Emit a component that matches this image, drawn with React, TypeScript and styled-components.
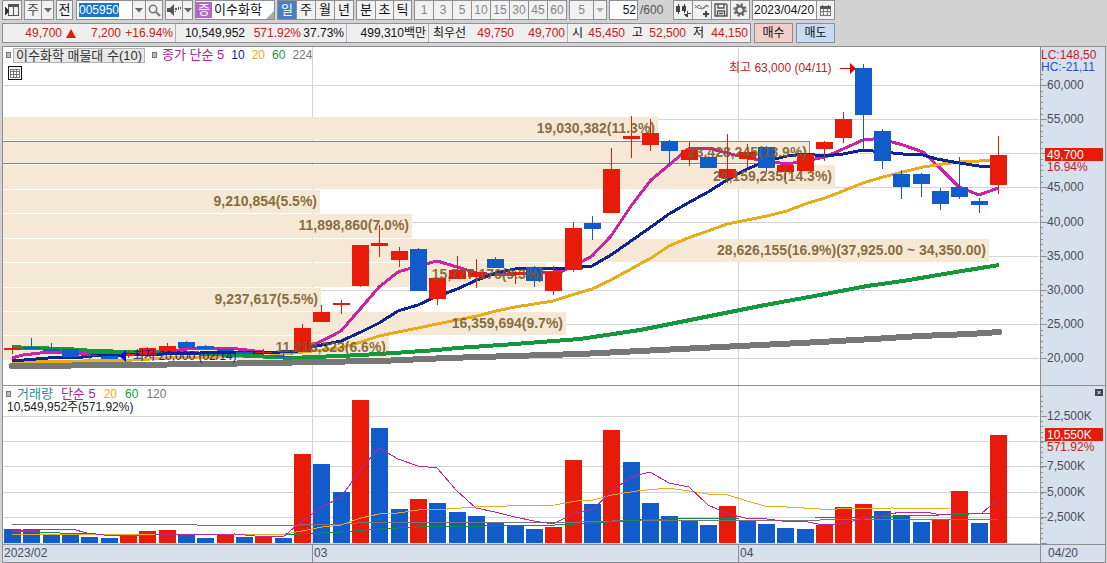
import React from "react";
import styled, { createGlobalStyle, css } from "styled-components";

const colors = {
  frame: "#d2d2d2",
  line: "#8f8f93",
  button: "#f1f1f1",
  axis: "#d7e1ee",
  grid: "#d4d4d4",
  up: "#e81a0a",
  down: "#125bcb",
  band: "#f5e9d6",
  bandText: "#7a5c2c",
  ma5: "#cc22a4",
  ma10: "#0f2490",
  ma20: "#e5ac1d",
  ma60: "#14983c",
  ma224: "#777777",
  red: "#c42018",
  text: "#4c4c54",
};

const GlobalStyle = createGlobalStyle`
  *, *::before, *::after { box-sizing: border-box; }
  body {
    margin: 0;
    background: ${colors.frame};
    color: #111;
    font-family: "Liberation Sans", "Noto Sans CJK KR", sans-serif;
    font-size: 12px;
    line-height: 18px;
  }
  button, input, select { font: inherit; color: inherit; margin: 0; padding: 0; border-radius: 0; }
`;

const Page = styled.main`
  display: flex;
  flex-direction: column;
  gap: 3px;
`;

const Toolbar = styled.div`
  display: flex;
  height: 20px;
  padding-left: 2px;
  gap: 2px;
`;

const Group = styled.div<{ $gap?: number }>`
  display: flex;
  flex: none;
  margin-right: ${(p) => p.$gap ?? 0}px;
  background: ${colors.button};
  border: 1px solid ${colors.line};
`;

const ToolButton = styled.button<{ $w: number; $active?: boolean; $dim?: boolean; $big?: boolean }>`
  display: flex;
  align-items: center;
  justify-content: center;
  flex: none;
  width: ${(p) => p.$w}px;
  height: 18px;
  line-height: 18px;
  font-size: ${(p) => (p.$big ? 13 : 12)}px;
  border: 0;
  background: ${(p) => (p.$active ? "#4a7fc2" : "transparent")};
  color: ${(p) => (p.$active ? "#fff" : p.$dim ? "#85858a" : "#111")};
  & + &, div + &, input + & { border-left: 1px solid ${colors.line}; }
`;

const SelectBox = styled.label<{ $w: number; $arrow: number; $dim?: boolean }>`
  display: grid;
  grid-template-columns: 1fr ${(p) => p.$arrow}px;
  flex: none;
  width: ${(p) => p.$w}px;
  border: 1px solid ${colors.line};
  background: ${colors.button};
  color: ${(p) => (p.$dim ? "#85858a" : "#444")};
  select {
    grid-area: 1 / 1 / 2 / 3;
    appearance: none;
    border: 0;
    background: transparent;
    width: 100%;
    height: 18px;
    padding: 0 ${(p) => p.$arrow}px 0 0;
    text-align: center;
    text-align-last: center;
    font-size: ${(p) => (p.$dim ? 12 : 13)}px;
    opacity: 1;
  }
`;

const ArrowCell = styled.span`
  grid-area: 1 / 2;
  display: flex;
  align-items: center;
  justify-content: center;
  border-left: 1px solid ${colors.line};
  pointer-events: none;
`;

const CodeField = styled.div`
  display: flex;
  align-items: center;
  width: 55px;
  padding-left: 2px;
  background: #fff;
  input {
    width: 40px;
    height: 14px;
    border: 0;
    line-height: 14px;
    background: #1a76cc;
    color: #fff;
    outline: none;
  }
`;

const NameBox = styled.div`
  display: flex;
  align-items: center;
  flex: none;
  width: 80px;
  border: 1px solid ${colors.line};
  background: #fff;
  font-size: 13px;
  white-space: nowrap;
`;

const MarketBadge = styled.span`
  flex: none;
  width: 16px;
  height: 16px;
  margin-right: 2px;
  line-height: 16px;
  text-align: center;
  background: #b368c8;
  color: #fff;
`;

const Corner = styled.svg`
  align-self: flex-end;
  margin-left: auto;
  flex: none;
`;

const TextField = styled.input<{ $w: number; $right?: boolean }>`
  width: ${(p) => p.$w}px;
  height: 18px;
  border: 0;
  padding: 0 1px;
  background: #fff;
  text-align: ${(p) => (p.$right ? "right" : "left")};
`;

const CountLabel = styled.span`
  flex: none;
  width: 31px;
  line-height: 20px;
  color: #555;
`;

const StatusRow = styled.div`
  display: flex;
  height: 20px;
  padding-left: 2px;
  gap: 3px;
`;

const Quote = styled.div`
  display: flex;
  flex: none;
  border: 1px solid ${colors.line};
  background: #efefef;
`;

const Cell = styled.div<{ $w: number }>`
  display: flex;
  justify-content: flex-end;
  align-items: center;
  flex: none;
  width: ${(p) => p.$w}px;
  padding-right: 2px;
  & + & { border-left: 1px solid #b4b4b8; }
`;

const Value = styled.span<{ $w?: number; $up?: boolean }>`
  ${(p) => p.$w && css`width: ${p.$w}px;`}
  text-align: right;
  white-space: nowrap;
  color: ${(p) => (p.$up ? colors.red : "#111")};
`;

const Marker = styled.svg`
  flex: none;
  margin-left: 4px;
`;

const TradeButton = styled.button<{ $buy?: boolean }>`
  width: 39px;
  height: 20px;
  border: 1px solid ${colors.line};
  background: ${(p) => (p.$buy ? "#f2cfcb" : "#c5dcf2")};
`;

const ChartFrame = styled.section`
  margin: 0 1px 0 2px;
  border: 1px solid ${colors.line};
  background: #fff;
`;

const Panel = styled.div`
  position: relative;
  & + & { border-top: 1px solid ${colors.line}; }
`;

const Plot = styled.svg`
  display: block;
  width: 100%;
  height: auto;
`;

const Overlay = styled.div`
  position: absolute;
  top: 0;
  left: 0;
  padding-left: 3px;
`;

const Legend = styled.div<{ $gap: number }>`
  display: flex;
  align-items: center;
  height: 16px;
  line-height: 16px;
  gap: ${(p) => p.$gap}px;
  font-size: 12px;
`;

const LegendItem = styled.span<{ $color: string; $wide?: boolean }>`
  color: ${(p) => p.$color};
  font-size: ${(p) => (p.$wide ? 13 : 12)}px;
`;

const Handle = styled.span`
  width: 5px;
  height: 6px;
  margin-right: -2px;
  border: 1px solid #777;
  background: #bbb;
`;

const TitleButton = styled.button`
  height: 15px;
  margin-left: -3px;
  padding: 0 2px;
  line-height: 13px;
  font-size: 13px;
  border: 1px solid #b4b4b4;
  background: #e9e9e9;
  color: #333;
  white-space: nowrap;
`;

const GridButton = styled.button`
  display: block;
  width: 14px;
  height: 14px;
  margin: 3px 0 0 2px;
  border: 0;
  background: #fff;
  svg { display: block; }
`;

const VolumeNote = styled.div`
  padding-left: 1px;
  line-height: 10px;
  color: #222;
`;

const DateBar = styled.div`
  display: grid;
  grid-template-columns: minmax(0, 309fr) minmax(0, 426fr) minmax(0, 302fr) minmax(0, 65fr);
  height: 18px;
  border-top: 1px solid ${colors.line};
  background: ${colors.axis};
  color: ${colors.text};
`;

const DateCell = styled.span<{ $pad?: boolean }>`
  padding-left: ${(p) => (p.$pad ? 7 : 1)}px;
  line-height: 16px;
  & + & { border-left: 1px solid ${colors.line}; }
`;

/* ---------- data ---------- */

const STEP = 58 / 3;
const BAR = 17;
const barX = (i: number) => Math.round(4 + i * STEP);

// [body top, body bottom, high, low, rising]
const candles: [number, number, number, number, 0 | 1][] = [
  [348, 350, 347, 354, 1], [347, 349, 338, 349, 0], [349, 351, 343, 351, 0], [349, 357, 349, 358, 0],
  [355, 356, 353, 359, 0], [356, 359, 355, 359, 0], [354, 356, 350, 358, 1], [348, 355, 347, 357, 1],
  [346, 352, 343, 352, 1], [342, 348, 341, 348, 0], [346, 349, 345, 349, 0], [349, 351, 349, 351, 0],
  [352, 354, 351, 355, 0], [352, 353, 349, 355, 1], [356, 357, 352, 360, 0], [328, 352, 324, 352, 1],
  [312, 322, 305, 322, 1], [303, 305, 300, 314, 1], [245, 286, 245, 287, 1], [243, 246, 225, 257, 1],
  [251, 260, 247, 267, 1], [249, 291, 248, 291, 0], [278, 299, 278, 305, 1], [270, 279, 256, 279, 1],
  [272, 277, 259, 288, 1], [259, 268, 257, 268, 0], [272, 275, 271, 284, 1], [267, 281, 266, 287, 0],
  [272, 291, 266, 295, 1], [228, 270, 222, 272, 1], [223, 229, 216, 240, 0], [169, 213, 148, 213, 1],
  [136, 139, 116, 158, 1], [133, 145, 119, 151, 1], [141, 151, 140, 165, 0], [150, 160, 142, 166, 1],
  [157, 168, 156, 168, 0], [169, 178, 134, 183, 1], [152, 159, 144, 167, 1], [147, 168, 146, 172, 0],
  [165, 172, 163, 179, 1], [154, 171, 154, 171, 1], [142, 149, 141, 161, 1], [119, 138, 112, 143, 1],
  [68, 115, 64, 150, 0], [131, 161, 129, 169, 0], [174, 187, 170, 199, 0], [174, 184, 173, 197, 0],
  [191, 204, 188, 210, 0], [187, 197, 157, 199, 0], [201, 205, 198, 213, 0], [155, 185, 136, 194, 1],
];

// [bar top, rising]
const volumes: [number, 0 | 1][] = [
  [529, 0], [529, 0], [534, 0], [534, 0], [537, 0], [538, 0], [535, 1], [531, 1], [530, 1], [534, 0],
  [538, 0], [534, 1], [537, 0], [537, 1], [538, 0], [454, 1], [464, 0], [492, 0], [400, 1], [428, 0],
  [509, 0], [499, 1], [503, 0], [512, 0], [516, 0], [523, 0], [526, 0], [529, 0], [527, 1], [460, 1],
  [504, 0], [430, 1], [462, 0], [503, 0], [516, 0], [520, 0], [525, 0], [506, 1], [521, 0], [524, 0],
  [528, 0], [529, 0], [525, 1], [507, 1], [504, 1], [511, 0], [515, 0], [522, 0], [520, 1], [491, 1],
  [523, 0], [435, 1],
];

const priceLines = [
  { color: colors.ma5, width: 3, points: "12,358 23,355 40,353 51,352 90,354 133,355 165,352 187,349 207,348 230,348 263,352 283,353 298,352 312,346 341,331 361,308 379,287 398,272 418,266 437,261 457,267 477,273 496,275 515,274 543,273 563,271 583,261 592,256 611,236 631,206 651,180 669,165 688,149 708,148 727,153 747,158 767,161 787,164 805,161 825,157 843,149 863,140 883,138 892,142 903,145 923,152 940,168 959,187 979,195 998,188" },
  { color: colors.ma20, width: 3, points: "12,361 43,361 83,361 133,360 167,358 220,357 270,356 293,353 312,351 341,348 361,342 379,336 398,332 418,328 437,324 457,320 477,316 496,311 515,307 534,304 553,301 575,294 592,289 611,280 631,269 651,258 669,246 688,238 708,231 727,224 747,220 767,216 787,211 805,204 825,198 843,191 863,183 883,177 903,172 923,167 943,164 959,162 979,161 998,160" },
  { color: colors.ma60, width: 4, points: "12,347 30,348 67,349 93,351 133,352 187,353 233,355 273,357 293,358 312,357 341,356 379,354 437,350 457,348 515,344 553,341 580,339 600,336 640,330 680,322 720,314 760,306 787,301 820,295 867,286 903,281 950,273 999,265" },
  { color: colors.ma10, width: 3, points: "12,361 36,359 60,357 83,357 100,355 125,355 200,353 233,352 280,352 298,351 312,347 341,341 361,332 379,323 398,311 418,305 433,298 457,289 477,280 496,273 515,269 534,268 553,269 573,268 592,266 611,255 631,241 651,227 669,214 688,203 708,192 727,180 747,169 767,161 787,156 805,154 825,156 843,154 863,150 883,152 903,154 923,155 937,159 959,163 979,166 998,167" },
];

const longLine = "12,366 133,365 273,363 312,362 380,361 447,358 513,356 580,354 700,348 820,342 873,339 920,336 970,334 999,332";

const volumeLines = [
  { color: "#777", points: "12,524 195,524 197,525 300,525 345,524 370,522 580,522 612,521 640,520 820,520 998,519" },
  { color: "#128a50", points: "12,531 60,533 90,534 280,535 341,532 379,529 398,528 418,527 485,526 500,525 555,525 593,523 640,520 668,519 740,518 815,518 870,517 940,515 998,513" },
  { color: colors.ma20, points: "12,535 175,534 285,534 302,531 322,527 341,525 361,518 379,514 398,513 418,510 447,509 476,507 507,506 555,505 577,501 593,500 612,495 637,491 668,488 689,491 708,494 728,495 747,501 765,506 787,507 820,509 837,509 892,508 950,509 998,509" },
  { color: "#b8289c", points: "12,531 23,530 40,530 60,529 72,529 87,533 104,535 117,536 155,535 235,534 255,536 283,537 302,521 322,507 341,497 361,469 379,448 398,459 418,466 437,468 457,491 476,508 495,512 515,517 534,521 553,524 573,514 593,509 612,491 631,477 650,472 669,483 689,487 708,505 728,514 745,518 767,519 782,521 808,522 823,525 837,524 853,521 882,516 900,512 925,512 942,515 960,513 981,514 998,499" },
];

// [top, bottom, right edge, label, label right edge]
const bands: [number, number, number, string, number][] = [
  [117, 140, 658, "19,030,382(11.3%)", 655],
  [141, 163, 809, "23,428,245(13.9%)", 807],
  [165, 189, 835, "24,159,235(14.3%)", 832],
  [190, 213, 320, "9,210,854(5.5%)", 317],
  [214, 238, 412, "11,898,860(7.0%)", 409],
  [239, 262, 989, "28,626,155(16.9%)(37,925.00 ~ 34,350.00)", 986],
  [263, 287, 546, "15,777,176(9.3%)", 543],
  [288, 311, 321, "9,237,617(5.5%)", 318],
  [312, 335, 566, "16,359,694(9.7%)", 563],
  [336, 360, 389, "11,218,323(6.6%)", 386],
];

const priceTicks: [number, string][] = [
  [85, "60,000"], [119, "55,000"], [153, "50,000"], [187, "45,000"], [222, "40,000"],
  [256, "35,000"], [290, "30,000"], [324, "25,000"], [358, "20,000"],
];
const volumeTicks: [number, string][] = [
  [416, "12,500K"], [441, ""], [466, "7,500K"], [492, "5,000K"], [517, "2,500K"], [543, ""],
];
const months = [312, 738];

/* ---------- pieces ---------- */

const Down = ({ dim }: { dim?: boolean }) => (
  <svg width="8" height="5" viewBox="0 0 8 5" aria-hidden="true">
    <path d="M0 0h8L4 4.6z" fill={dim ? "#b0b0b0" : "#666"} />
  </svg>
);

const HGrid = ({ ys }: { ys: number[] }) => (
  <g fill={colors.grid}>
    {ys.map((y) => <rect key={y} x="3" y={y} width="1036" height="1" />)}
  </g>
);

const Axis = ({ top, bottom, majors, minors }: { top: number; bottom: number; majors: number[]; minors: number[] }) => (
  <g>
    <rect x="1040" y={top} width="65" height={bottom - top} fill={colors.axis} />
    <g fill={colors.line}>
      <rect x="1040" y={top} width="1" height={bottom - top} />
      {minors.map((y) => <rect key={y} x="1041" y={y} width="2" height="1" />)}
      {majors.map((y) => <rect key={y} x="1041" y={y} width="6" height="1" />)}
    </g>
  </g>
);

const range = (from: number, to: number, step: number) => {
  const out: number[] = [];
  for (let y = from; y <= to; y += step) out.push(Math.round(y));
  return out;
};

const PriceChart = () => (
  <Plot viewBox="3 47 1102 338" role="img" aria-label="이수화학 일봉 차트">
    <g shapeRendering="crispEdges">
      <HGrid ys={priceTicks.map((t) => t[0])} />
      {months.map((x) => <rect key={x} x={x} y="47" width="1" height="338" fill={colors.grid} />)}
      {bands.map(([t, b, r]) => <rect key={t} x="3" y={t} width={r - 3} height={b - t} fill={colors.band} />)}
      <path d="M3 141.5H809.5V163.5H3" fill="none" stroke="#858585" />
      {priceLines.map((l) => (
        <polyline key={l.color} points={l.points} fill="none" stroke={l.color} strokeWidth={l.width} strokeLinejoin="round" />
      ))}
      <polyline points={longLine} fill="none" stroke={colors.ma224} strokeWidth="6" strokeLinecap="round" />
      {candles.map(([t, b, h, l, up], i) => (
        <g key={i} fill={up ? colors.up : colors.down}>
          <rect x={barX(i) + 8} y={h} width="1" height={l - h} />
          <rect x={barX(i)} y={t} width={BAR} height={b - t} />
        </g>
      ))}
      <Axis top={47} bottom={385} majors={priceTicks.map((t) => t[0])} minors={range(73.7, 358, 5.686)} />
      <rect x="1045" y="148" width="58" height="13" fill={colors.up} />
    </g>
    <g fontSize="14" fontWeight="700" fill={colors.bandText} fillOpacity="0.9" textAnchor="end">
      {bands.map(([t, , , label, x]) => <text key={t} x={x} y={t + 16}>{label}</text>)}
    </g>
    <g fontSize="12">
      <text x="729" y="72" fill={colors.red}>최고 63,000 (04/11)</text>
      <path d="M840 68h10v-5l6 5.500-6 5.500v-5h-10z" fill="#e00008" />
      <text x="133" y="360" fill="#1414b8">최저 20,000 (02/14)</text>
      <path d="M119 356l7-6v12z" fill="#0010d8" />
      <g fill={colors.text}>
        {priceTicks.filter((t) => t[0] !== 153).map(([y, label]) => <text key={y} x="1047" y={y + 4}>{label}</text>)}
      </g>
      <text x="1047" y="159" fill="#fff">49,700</text>
      <text x="1047" y="171" fill={colors.red}>16.94%</text>
      <text x="1041" y="59" fill={colors.red}>LC:148,50</text>
      <text x="1041" y="71" fill="#2058b8">HC:-21,11</text>
    </g>
  </Plot>
);

const VolumeChart = () => (
  <Plot viewBox="3 386 1102 158" role="img" aria-label="거래량 차트">
    <g shapeRendering="crispEdges">
      <HGrid ys={volumeTicks.map((t) => t[0])} />
      {months.map((x) => <rect key={x} x={x} y="386" width="1" height="158" fill={colors.grid} />)}
      {volumes.map(([t, up], i) => (
        <rect key={i} x={barX(i)} y={t} width={BAR} height={543 - t} fill={up ? colors.up : colors.down} />
      ))}
      {volumeLines.map((l) => <polyline key={l.color} points={l.points} fill="none" stroke={l.color} />)}
      <Axis top={386} bottom={544} majors={volumeTicks.map((t) => t[0])} minors={range(396, 540, 5.08)} />
      <rect x="1045" y="428" width="58" height="13" fill={colors.up} />
      <rect x="1095" y="389" width="8" height="7" fill="#444450" />
    </g>
    <path d="M1097.500 391l3 3m0-3l-3 3" stroke="#fff" />
    <g fontSize="12" fill={colors.text}>
      {volumeTicks.map(([y, label]) => label && <text key={y} x="1047" y={y + 4}>{label}</text>)}
      <text x="1047" y="439" fill="#fff">10,550K</text>
      <text x="1047" y="451" fill={colors.red}>571.92%</text>
    </g>
  </Plot>
);

const periods = [["일", "주", "월", "년"], ["분", "초", "틱"]];
const minutes = ["1", "3", "5", "10", "15", "30", "45", "60"];

export default function App() {
  return (
    <Page>
      <GlobalStyle />
      <Toolbar>
        <Group>
          <ToolButton $w={18} aria-label="패널 접기">
            <svg width="15" height="14" viewBox="0 0 15 14" shapeRendering="crispEdges">
              <path d="M3.500 1.500h10v11h-10zM3 3.500h11M8.500 4v9" fill="none" stroke="#555" />
              <path d="M3 1h11v2H3z" fill="#555" />
              <path d="M0 4l5 4-5 4z" fill="#333" />
            </svg>
          </ToolButton>
        </Group>
        <SelectBox $w={30} $arrow={12}>
          <select aria-label="종목 구분" defaultValue="주"><option>주</option></select>
          <ArrowCell><Down /></ArrowCell>
        </SelectBox>
        <Group $gap={1}><ToolButton $w={15} $big>전</ToolButton></Group>
        <Group>
          <CodeField><input aria-label="종목코드" defaultValue="005950" /></CodeField>
          <ToolButton $w={13} aria-label="종목 목록"><Down /></ToolButton>
          <ToolButton $w={17} aria-label="종목 검색">
            <svg width="13" height="13" viewBox="0 0 13 13" fill="none" stroke="#777">
              <circle cx="5" cy="5" r="3.700" strokeWidth="1.500" />
              <path d="M8 8l4 4" strokeWidth="2.200" />
            </svg>
          </ToolButton>
        </Group>
        <Group>
          <ToolButton $w={16} aria-label="음성">
            <svg width="14" height="12" viewBox="0 0 14 12" fill="#555">
              <path d="M0 4h3l4-4v12L3 8H0zM8 4h2v2H8zM11 3h1v3h-1zM8 7h1v1H8zM13 3h1v2h-1z" />
            </svg>
          </ToolButton>
          <ToolButton $w={10} aria-label="음성 설정"><Down /></ToolButton>
        </Group>
        <NameBox>
          <MarketBadge>증</MarketBadge>이수화학
          <Corner width="8" height="8" viewBox="0 0 8 8"><path d="M8 0v8H0z" fill="#aaa" /></Corner>
        </NameBox>
        {periods.map((names) => (
          <Group key={names[0]}>
            {names.map((n, i) => (
              <ToolButton key={n} $w={i > 0 && names.length === 4 ? 19 : 18} $active={n === "일"} $big>{n}</ToolButton>
            ))}
          </Group>
        ))}
        <Group>
          {minutes.map((n, i) => <ToolButton key={n} $w={i ? 19 : 18} $dim>{n}</ToolButton>)}
        </Group>
        <SelectBox $w={38} $arrow={13} $dim>
          <select aria-label="분 간격" defaultValue="5" disabled><option>5</option></select>
          <ArrowCell><Down dim /></ArrowCell>
        </SelectBox>
        <Group>
          <TextField $w={27} $right aria-label="표시 개수" defaultValue="52" />
        </Group>
        <CountLabel>/600</CountLabel>
        <Group>
          <ToolButton $w={18} aria-label="봉 추가">
            <svg width="16" height="15" viewBox="0 0 16 15" fill="#444" shapeRendering="crispEdges">
              <path d="M1 3h4v6H1zM3 1h1v10H3zM7 3h4v5H7zM9 1h1v9H9zM12 8h1v2h3v1h-3v3h-2l-2-3h3z" />
            </svg>
          </ToolButton>
          <ToolButton $w={19} aria-label="지표 추가">
            <svg width="16" height="15" viewBox="0 0 16 15" fill="none" stroke="#777">
              <path d="M1 5l4-3 4 4 5-4M1 2l3 3 4 1 4-4 3 2" />
              <path d="M12 8v6M9 11h6" strokeWidth="2" stroke="#444" />
            </svg>
          </ToolButton>
          <ToolButton $w={19} aria-label="저장">
            <svg width="14" height="14" viewBox="0 0 14 14" fill="none" stroke="#555" strokeWidth="1.400">
              <path d="M1 1h11l1 1v11H1zM4 1v4h6V1M3.500 13V8h7v5M5 10.500h4" />
            </svg>
          </ToolButton>
          <ToolButton $w={19} aria-label="설정">
            <svg width="14" height="14" viewBox="0 0 14 14" fill="none" stroke="#666">
              <circle cx="7" cy="7" r="3.700" strokeWidth="2.400" />
              <circle cx="7" cy="7" r="5.700" strokeWidth="2" strokeDasharray="2.240 2.240" />
            </svg>
          </ToolButton>
        </Group>
        <Group>
          <TextField $w={63} aria-label="조회일" defaultValue="2023/04/20" />
          <ToolButton $w={18} aria-label="달력">
            <svg width="11" height="11" viewBox="0 0 11 11" shapeRendering="crispEdges">
              <path d="M.5 1.500h10v9H.5zM1 6.500h9M3.500 4v6M7.500 4v6" fill="none" stroke="#777" />
              <path d="M0 1h11v3H0zM2 0h1v1H2zM8 0h1v1H8z" fill="#555" />
            </svg>
          </ToolButton>
        </Group>
      </Toolbar>

      <StatusRow>
        <Quote>
          <Cell $w={172}>
            <Value $up>49,700</Value>
            <Marker width="10" height="9" viewBox="0 0 10 9"><path d="M5 0l5 9H0z" fill={colors.up} /></Marker>
            <Value $w={45} $up>7,200</Value>
            <Value $w={52} $up>+16.94%</Value>
          </Cell>
          <Cell $w={171}>
            <Value>10,549,952</Value>
            <Value $w={56} $up>571.92%</Value>
            <Value $w={43}>37.73%</Value>
          </Cell>
          <Cell $w={82}><Value>499,310백만</Value></Cell>
          <Cell $w={139}>
            <Value>최우선</Value>
            <Value $w={48} $up>49,750</Value>
            <Value $w={51} $up>49,700</Value>
          </Cell>
          <Cell $w={183}>
            <Value>시</Value><Value $w={42} $up>45,450</Value>
            <Value $w={18}>고</Value><Value $w={43} $up>52,500</Value>
            <Value $w={18}>저</Value><Value $w={44} $up>44,150</Value>
          </Cell>
        </Quote>
        <TradeButton $buy>매수</TradeButton>
        <TradeButton>매도</TradeButton>
      </StatusRow>

      <ChartFrame>
        <Panel>
          <PriceChart />
          <Overlay>
            <Legend $gap={7}>
              <Handle />
              <TitleButton>이수화학 매물대 수(10)</TitleButton>
              <Handle />
              <LegendItem $color="#b0209c" $wide>종가 단순 5</LegendItem>
              <LegendItem $color={colors.ma10}>10</LegendItem>
              <LegendItem $color={colors.ma20}>20</LegendItem>
              <LegendItem $color={colors.ma60}>60</LegendItem>
              <LegendItem $color={colors.ma224}>224</LegendItem>
            </Legend>
            <GridButton aria-label="데이터 표">
              <svg width="14" height="14" viewBox="0 0 14 14" shapeRendering="crispEdges">
                <path d="M.5.5h13v13H.5z" fill="#fff" stroke="#111" />
                <path d="M2.500 3.500h9v8h-9zM3 5.500h8M3 8.500h8M5.500 4v7M8.500 4v7" fill="none" stroke="#777" />
              </svg>
            </GridButton>
          </Overlay>
        </Panel>
        <Panel>
          <VolumeChart />
          <Overlay>
            <Legend $gap={8}>
              <Handle />
              <LegendItem $color="#2c8c90" $wide>거래량</LegendItem>
              <LegendItem $color="#b0209c" $wide>단순 5</LegendItem>
              <LegendItem $color={colors.ma20}>20</LegendItem>
              <LegendItem $color={colors.ma60}>60</LegendItem>
              <LegendItem $color={colors.ma224}>120</LegendItem>
            </Legend>
            <VolumeNote>10,549,952주(571.92%)</VolumeNote>
          </Overlay>
        </Panel>
        <DateBar>
          <DateCell>2023/02</DateCell>
          <DateCell>03</DateCell>
          <DateCell>04</DateCell>
          <DateCell $pad>04/20</DateCell>
        </DateBar>
      </ChartFrame>
    </Page>
  );
}
